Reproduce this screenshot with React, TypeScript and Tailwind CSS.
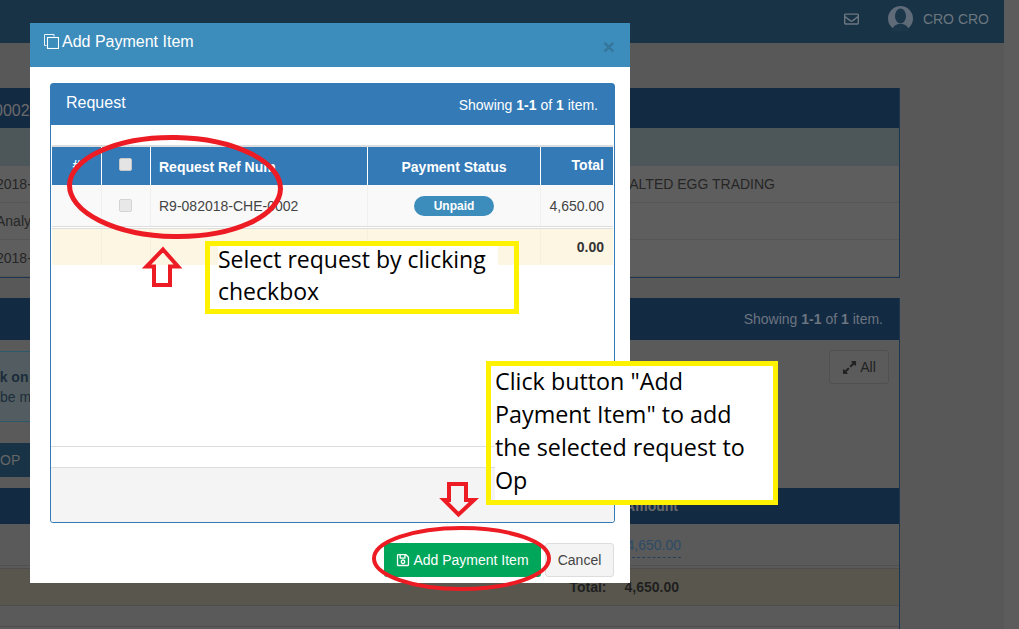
import { FaExpandAlt, FaRegEnvelope, FaRegSave } from 'react-icons/fa';

const arial = 'font-["Liberation_Sans",Arial,sans-serif]';

function BackdropRow({ left, right }: { left: string; right?: string }) {
  return (
    <div className="flex h-[37px] shrink-0 items-center justify-between border-b border-[#565656] bg-[#5e5e5e] text-sm text-[#262626]">
      <span className="ml-[-4px]">{left}</span>
      {right && <span className="mr-[124px]">{right}</span>}
    </div>
  );
}

function Backdrop() {
  return (
    <div className="flex h-[629px] w-[1004px] shrink-0 flex-col overflow-hidden">
      <header className="flex h-[43px] shrink-0 items-center justify-end bg-[#173345] pr-[15px] pb-[6px] text-sm text-[#6c7780]">
        <FaRegEnvelope className="mr-[29px] h-[16px] w-[15px]" />
        <svg viewBox="0 0 25 25" className="mr-[10px] h-[25px] w-[25px]">
          <circle cx="12.5" cy="12.5" r="12.5" fill="#5f6b79" />
          <ellipse cx="12.5" cy="10" rx="5.5" ry="7.5" fill="#1b3749" />
          <path d="M4 25c.5-5 4-6 6-7h5c2 1 5.500 2 6 7z" fill="#1b3749" />
        </svg>
        <span>CRO CRO</span>
      </header>

      <div className="flex-1 bg-[#585858] pt-[45px] pr-[104px]">
        <section className="h-[190px] border-r border-b border-[#1d3650] bg-[#5a5a5a]">
          <div className="flex h-[40px] items-center bg-[#132a43] pt-[5px] text-base text-[#6b6b6b]">
            <span className="ml-[-6px]">0002</span>
          </div>
          <div className="h-[38px] bg-[#4d5759]" />
          <BackdropRow left="2018-" right="SALTED EGG TRADING" />
          <BackdropRow left="Analy" />
          <BackdropRow left="2018-" />
        </section>

        <section className="mt-[20px] h-[400px] border-r border-[#1d3650] bg-[#5a5a5a]">
          <div className="flex h-[42px] items-center justify-end bg-[#132a43] pr-[16px] text-sm text-[#6c7580]">
            <span>
              Showing <b>1-1</b> of <b>1</b> item.
            </span>
          </div>
          <div className="relative h-[148px] pt-[11px]">
            <div className="flex h-[71px] w-[600px] flex-col justify-center border-y border-[#2b5a6c] bg-[#535d61] text-sm leading-[20px] text-[#1b2c3a]">
              <b className="ml-[-26px]">Click on each</b>
              <span>be made</span>
            </div>
            <div className="absolute top-[103px] left-0 flex h-[34px] w-[60px] items-center bg-[#173345] text-sm text-[#666]">
              OP
            </div>
            <button className="absolute top-[10px] right-[10px] flex h-[34px] w-[60px] items-center justify-center gap-[3px] rounded-[3px] border border-[#505050] bg-[#5b5b5b] text-sm text-[#222]">
              <FaExpandAlt className="h-[15px] w-[15px]" />
              All
            </button>
          </div>
          <div className="flex h-[36px] items-center justify-end bg-[#132a43] pr-[221px] text-sm font-bold text-[#6b6b6b]">
            Amount
          </div>
          <div className="flex h-[42px] items-start justify-end border-b border-[#505050] pt-[12px] pr-[218px]">
            <span className="border-b border-dashed border-[#26415c] pb-[2px] text-sm leading-[19px] text-[#2d4a66]">
              4,650.00
            </span>
          </div>
          <div className="mt-[2px] flex h-[38px] items-center justify-end border-y border-[#4e4e4e] bg-[#59574d] pr-[220px] text-sm font-bold text-[#1f1f1f]">
            <span className="mr-[18px]">Total:</span>
            <span>4,650.00</span>
          </div>
          <div className="h-[21px] border-b border-[#4e4e4e]" />
        </section>
      </div>
    </div>
  );
}

const columns = 'grid grid-cols-[50px_49px_217px_173px_72px]';

function RequestPanel() {
  return (
    <div className="flex h-[440px] flex-col rounded-[3px] border border-[#337ab7] bg-white">
      <div className="flex h-[41px] shrink-0 items-center justify-between bg-[#337ab7] pr-[16px] pl-[15px] text-white">
        <span className="pb-[3px] text-base">Request</span>
        <span className="text-sm">
          Showing <b>1-1</b> of <b>1</b> item.
        </span>
      </div>
      <div className="flex-1 pt-[20px] pl-[1px]">
        <div className="h-[2px] w-[561px] bg-[#dddddd]" />
        <div className={`${columns} h-[38px] w-[561px] bg-[#337ab7] text-sm font-bold text-white`}>
          <div className="flex items-center justify-center border-r border-white pb-[2px]">#</div>
          <div className="flex items-center justify-center border-r border-white pr-[2px] pb-[4px]">
            <span className="h-[13px] w-[13px] rounded-[2px] border border-[#c8c8c8] bg-[#e4e4e4]" />
          </div>
          <div className="flex items-center border-r border-white pt-[2px] pl-[8px]">Request Ref Num</div>
          <div className="flex items-center justify-center border-r border-white pt-[2px]">Payment Status</div>
          <div className="flex items-center justify-end pr-[9px] pb-[2px]">Total</div>
        </div>
        <div className={`${columns} h-[41px] w-[561px] bg-[#f9f9f9] text-sm text-[#444]`}>
          <div className="border-r border-[#f0f0f0]" />
          <div className="flex items-center justify-center border-r border-[#f0f0f0] pr-[2px]">
            <span className="h-[13px] w-[13px] rounded-[2px] border border-[#d4d4d4] bg-[#e8e8e8]" />
          </div>
          <div className="flex items-center border-r border-[#f0f0f0] pl-[8px]">R9-082018-CHE-0002</div>
          <div className="flex items-center justify-center border-r border-[#f0f0f0]">
            <span className="flex h-[20px] w-[80px] items-center justify-center rounded-full bg-[#3c8dbc] text-xs font-bold text-white">
              Unpaid
            </span>
          </div>
          <div className="flex items-center justify-end pr-[9px]">4,650.00</div>
        </div>
        <div className="h-[2px] w-[561px] border-t border-[#dddddd]" />
        <div className={`${columns} h-[37px] w-[561px] border-t border-[#dddddd] bg-[#fdf6e3] text-sm font-bold text-[#333]`}>
          <div className="border-r border-[#f5efdc]" />
          <div className="border-r border-[#f5efdc]" />
          <div className="border-r border-[#f5efdc]" />
          <div className="border-r border-[#f5efdc]" />
          <div className="flex items-center justify-end pr-[9px]">0.00</div>
        </div>
      </div>
      <div className="h-[21px] shrink-0 border-t border-[#dddddd]" />
      <div className="h-[55px] shrink-0 rounded-b-[3px] border-t border-[#dddddd] bg-[#f4f4f4]" />
    </div>
  );
}

function Modal() {
  return (
    <div className="absolute top-[23px] left-[30px] flex h-[560px] w-[600px] flex-col bg-white">
      <div className="flex h-[44px] shrink-0 items-center justify-between bg-[#3d8dbc] pr-[15px] pl-[14px] text-white">
        <div className="flex items-center gap-[3px] pb-[7px] text-base">
          <svg viewBox="0 0 15 15" fill="none" stroke="currentColor" className="h-[15px] w-[15px]">
            <path d="M2.500 11.500H.5V.5h9.500v2" strokeWidth="0.9" />
            <rect x="3.500" y="3.500" width="11" height="11" strokeWidth="1.100" />
          </svg>
          <span>Add Payment Item</span>
        </div>
        <span className="pt-[3px] text-[21px] leading-none font-bold text-[#35769c]">×</span>
      </div>
      <div className="flex-1 pt-[16px] pr-[15px] pl-[20px]">
        <RequestPanel />
        <div className="mt-[20px] flex justify-end gap-[4px] pr-[1px] text-sm">
          <button className="flex h-[34px] w-[157px] items-center justify-center gap-[3px] rounded-[3px] bg-[#00a65a] text-white">
            <FaRegSave className="h-[14px] w-[14px]" />
            Add Payment Item
          </button>
          <button className="h-[34px] w-[69px] rounded-[3px] border border-[#ddd] bg-[#f4f4f4] text-[#444]">
            Cancel
          </button>
        </div>
      </div>
    </div>
  );
}

// hand-drawn markup that sits on top of the screenshot
function Annotations() {
  return (
    <>
      <svg viewBox="0 0 1019 629" fill="none" stroke="#ed1c24" className="absolute inset-0 h-[629px] w-[1019px]">
        <ellipse cx="175" cy="187" rx="105.500" ry="49.500" strokeWidth="5" transform="rotate(1 175 187)" />
        <ellipse cx="461.500" cy="558.500" rx="87.500" ry="30.500" strokeWidth="4" />
        <path d="M163 249.500 178 266.500H170V285H154V266.500H146.500Z" strokeWidth="4" />
        <path d="M449 484H466V500H474L458.500 514.500 444 500H449Z" strokeWidth="4" />
      </svg>
      <div className='absolute top-[241px] left-[205px] h-[73px] w-[314px] border-[5px] border-[#fff200] pl-[8px] font-["Open_Sans",sans-serif] text-[23px] text-black'>
        <div className="w-[280px] bg-white leading-[27px]">Select request by clicking</div>
        <div className="leading-[36px]">checkbox</div>
      </div>
      <div className='absolute top-[361px] left-[486px] h-[144px] w-[292px] border-[5px] border-[#fff200] pl-[4px] font-["Open_Sans",sans-serif] text-[23.3px] leading-[33px] text-black'>
        <div className="h-full overflow-hidden bg-white">
          <div className="mt-[-1px]">
            Click button "Add
            <br />
            Payment Item" to add
            <br />
            the selected request to
            <br />
            Op
          </div>
        </div>
      </div>
    </>
  );
}

export default function App() {
  return (
    <div className={`relative flex h-[629px] w-[1019px] overflow-hidden bg-[#5c5c5c] ${arial}`}>
      <Backdrop />
      <Modal />
      <Annotations />
    </div>
  );
}
